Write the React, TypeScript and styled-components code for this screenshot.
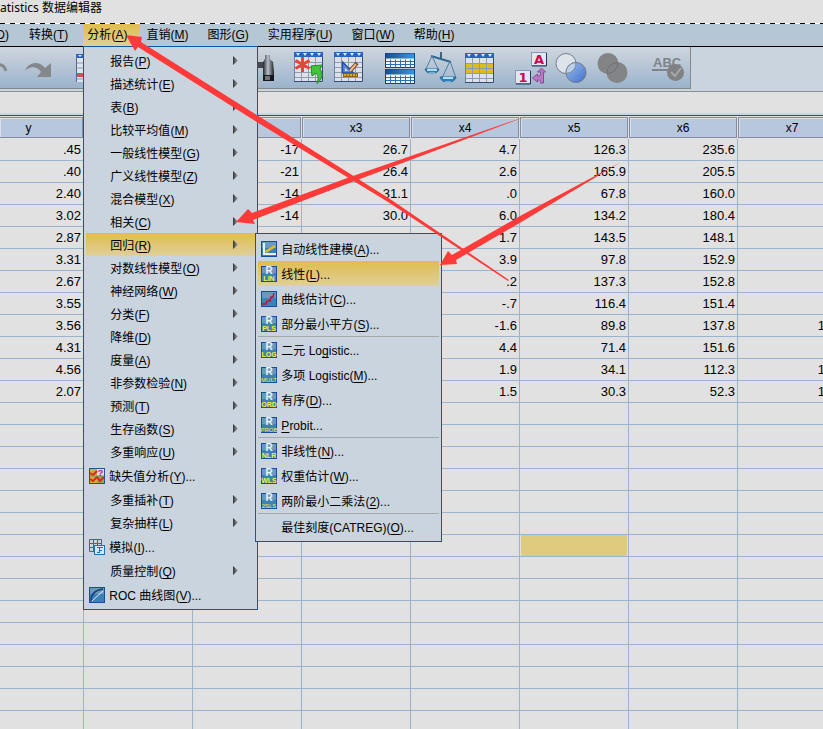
import React from 'react';
import styled, { createGlobalStyle, css } from 'styled-components';

const ink = '#000';
const blue = '#0f59a3';
const sheet = '#e1e1e1';
const panel = '#cad4df';
const gridLine = '#9ab4d0';
const gold = 'linear-gradient(#e0bd4c, #dfcf9c)';
const red = '#ff3a38';

const GlobalStyle = createGlobalStyle`
  * { box-sizing: border-box; }
  html, body { margin: 0; height: 100%; overflow: hidden; }
  #root { height: 100%; }
  body {
    background: ${sheet};
    color: ${ink};
    font: 12px/16px "Liberation Sans", "Noto Sans CJK SC", sans-serif;
  }
  button { font: inherit; color: inherit; border: 0; background: none; padding: 0; text-align: left; }
`;

const Window = styled.div`
  position: relative;
  height: 100%;
  overflow: hidden;
  display: flex;
  flex-direction: column;
`;

const TitleBar = styled.header`
  flex: none;
  height: 24px;
  position: relative;
  font-family: "Noto Sans", "Noto Sans CJK SC", sans-serif;
  line-height: 16px;
  white-space: pre;
  display: flex;
  flex-direction: column;
  justify-content: space-between;
`;

const DashedRule = styled.div`
  height: 1px;
  background: repeating-linear-gradient(90deg, #000 0 5px, #fff 5px 10px);
`;

const MenuBar = styled.nav`
  flex: none;
  height: 23px;
  display: flex;
  gap: 2px;
  background: #b5c7d5;
  border-bottom: 1px solid #000;
`;

const MenuBarItem = styled.div`
  position: relative;
  height: 22px;
`;

const MenuBarButton = styled.button<{ $open?: boolean; $cut?: boolean }>`
  height: 22px;
  padding: 0 13px 0 4px;
  white-space: nowrap;
  background: ${(p) => (p.$open ? gold : 'none')};
  ${(p) =>
    p.$cut &&
    css`
      display: flex;
      align-items: center;
      justify-content: flex-end;
      width: 23px;
      padding: 0 14px 0 0;
      overflow: hidden;
    `}
`;

const MenuList = styled.ul`
  position: absolute;
  z-index: 2;
  margin: 0;
  padding: 2px;
  list-style: none;
  background: ${panel};
  border: 1px solid ${blue};
`;

const MainMenu = styled(MenuList)`
  left: 0;
  top: 100%;
  width: 175px;
`;

const SubMenu = styled(MenuList)`
  left: 100%;
  top: 0;
  width: 187px;
`;

const MenuItem = styled.li<{ $active?: boolean; $tall?: boolean }>`
  position: relative;
  height: ${(p) => (p.$tall ? 25 : 23)}px;
  background: ${(p) => (p.$active ? gold : 'none')};
`;

const MenuSeparator = styled.li`
  height: 1px;
  background: #a5a8ab;
`;

const MenuButton = styled.button<{ $indent?: number }>`
  display: flex;
  align-items: center;
  gap: 4px;
  width: 100%;
  height: 100%;
  padding: 0 17px 0 ${(p) => p.$indent ?? 3}px;
  white-space: nowrap;
`;

const MenuLabel = styled.span`
  flex: 1;
  padding-top: 2px;
`;

const Mnemonic = styled.span`
  text-decoration: underline;
  text-underline-offset: 2px;
  text-decoration-skip-ink: none;
`;

const ToolbarArea = styled.div`
  flex: none;
  display: flex;
  background: ${panel};
  padding-bottom: 2px;
  border-bottom: 1px solid #8c9095;
`;

const Toolbar = styled.div`
  display: flex;
  align-items: center;
  height: 42px;
  padding-right: 6px;
  background: linear-gradient(#cfd6de, #9bb3cb);
  border-right: 1px solid #85878a;
  border-bottom: 1px solid #85878a;
`;

const ToolGroup = styled.div<{ $gap?: number }>`
  display: flex;
  gap: 8px;
  margin-left: ${(p) => p.$gap ?? 20}px;
`;

const ToolButton = styled.button`
  display: block;
  height: 32px;
  svg { display: block; overflow: visible; }
`;

const CellEditor = styled.input`
  flex: none;
  width: 100%;
  height: 21px;
  border: 0;
  background: ${sheet};
  font: inherit;
`;

const GridArea = styled.main`
  flex: 1;
  overflow: hidden;
  border-top: 2px solid #ccd5df;
  display: flex;
`;

const GridFrame = styled.div`
  flex: 1;
  overflow: hidden;
  border-top: 1px solid ${blue};
  padding-top: 1px;
`;

const DataTable = styled.table`
  table-layout: fixed;
  width: 847px;
  border-collapse: separate;
  border-spacing: 0;
`;

const Col = styled.col<{ $w: number }>`
  width: ${(p) => p.$w}px;
`;

const HeadCell = styled.th`
  height: 22px;
  padding: 0 1px 1px 0;
  font-weight: normal;
`;

const HeadFace = styled.div<{ $first?: boolean }>`
  height: 21px;
  line-height: 19px;
  padding-top: 1px;
  padding-right: ${(p) => (p.$first ? 25 : 0)}px;
  background: #b6c7de;
  border: 1px solid #838ca0;
  border-left-width: ${(p) => (p.$first ? 0 : 1)}px;
  box-shadow: inset 1px 1px 0 #d6dfea;
`;

const Cell = styled.td<{ $selected?: boolean; $edge?: boolean }>`
  height: 22px;
  padding: 0 ${(p) => (p.$edge ? 21 : 2)}px 0 0;
  text-align: right;
  font-size: 13px;
  line-height: 20px;
  border-right: 1px solid ${gridLine};
  border-bottom: 1px solid ${gridLine};
  ${(p) =>
    p.$selected &&
    css`
      background: #dfcb7d;
      box-shadow: inset 1px 0 0 ${sheet}, inset -1px 0 0 ${sheet};
    `}
`;

const Annotations = styled.svg`
  position: absolute;
  left: 0;
  top: 0;
  z-index: 5;
  pointer-events: none;
`;

/* ---------- menu icons ---------- */

const Tile = ({ children }: { children?: React.ReactNode }) => (
  <svg width="16" height="16" viewBox="0 0 16 16">
    <rect width="16" height="16" fill="#174f9e" />
    <rect x="1" y="1" width="14" height="7" fill="#6b99bd" />
    <rect x="1" y="7" width="14" height="8" fill="#3c82b5" />
    {children}
  </svg>
);

const RIcon = ({ code }: { code: string }) => (
  <Tile>
    <text x="8" y="8" textAnchor="middle" fontFamily="Liberation Sans" fontWeight="bold" fontSize="10" fill="#eef1f6">R</text>
    <text x="8" y="15" textAnchor="middle" fontFamily="Liberation Sans" fontWeight={code.length > 3 ? 'normal' : 'bold'} fontSize={code.length > 3 ? 6 : 7} fill="#f4ef3a">{code}</text>
  </Tile>
);

const AutoLinearIcon = () => (
  <Tile>
    <path d="M3 2v11h12" fill="none" stroke="#eceff2" strokeWidth="2" />
    <path d="M4.500 11L14 5" stroke="#e3c21f" strokeWidth="2.500" />
  </Tile>
);

const CurveIcon = () => (
  <Tile>
    <path d="M1 13h4l1-3h3l1-4h2l1-4" fill="none" stroke="#b81531" strokeWidth="1.500" />
  </Tile>
);

const MissingIcon = () => (
  <svg width="16" height="16" viewBox="0 0 16 16">
    <rect width="16" height="16" fill="#26509b" />
    <rect x="1" y="1" width="7" height="14" fill="#d8a83a" />
    <rect x="8" y="1" width="7" height="7" fill="#ead9e6" />
    <rect x="8" y="8" width="7" height="7" fill="#8fa84c" />
    <path d="M1 5l3 2 4-4M1 11l3 2 4-4 3 4 4-4" fill="none" stroke="#d92525" strokeWidth="2" />
    <path d="M1 8h14" stroke="#5fa244" />
    <text x="11.500" y="8" textAnchor="middle" fontFamily="Liberation Sans" fontWeight="bold" fontSize="9" fill="#9a169c">?</text>
  </svg>
);

const SimulateIcon = () => (
  <svg width="16" height="16" viewBox="0 0 16 16" fill="none" stroke="#1673c4">
    <path d="M.5.5h12v12H.5zM.5 4.500h12M.5 8.500h8M4.500.5v12M8.500.5v12" />
    <rect x="5.500" y="6.500" width="10" height="9" fill="#d9e6f2" />
    <path d="M8 8.500h6M10 11.500h3M10.500 9v5M8 13.500h3" />
  </svg>
);

const RocIcon = () => (
  <Tile>
    <path d="M2 14C2 7 6 3 14 2" fill="none" stroke="#173f78" strokeWidth="1.500" />
    <path d="M3 14L14 4" stroke="#e8eef4" />
  </Tile>
);

const Arrow = () => (
  <svg width="5" height="9" viewBox="0 0 5 9">
    <defs>
      <linearGradient id="tri">
        <stop offset="0" stopColor="#2f3338" />
        <stop offset="1" stopColor="#a8a8a8" />
      </linearGradient>
    </defs>
    <path d="M0 0l5 4.500L0 9z" fill="url(#tri)" />
  </svg>
);

const EmptyIcon = () => <svg width="16" height="16" viewBox="0 0 16 16" />;

/* ---------- toolbar icons ---------- */

const Svg = ({ children, w = 32 }: { children: React.ReactNode; w?: number }) => (
  <svg width={w} height="32" viewBox={`0 0 ${w} 32`}>{children}</svg>
);

const SheetBase = ({ band }: { band?: string }) => (
  <g>
    <rect x="2" y="0" width="29" height="30" fill="#dde2ea" />
    {band && <rect x="2" y="10" width="29" height="10" fill={band} />}
    <path d="M2 10.500h28M2 15.500h28M2 20.500h28M2 25.500h28M9.500 5v25M16.500 5v25M23.500 5v25" stroke="#929baa" fill="none" />
    <rect x="2" y="0" width="29" height="5" fill="#2b63c4" />
    <path d="M4 1h4l-2 3zM11 1h4l-2 3zM18 1h4l-2 3zM25 1h4l-2 3z" fill="#dfe8f6" />
    <path d="M2.500 5v25" stroke="#6c82a6" />
    <path d="M30.500 5v24.500H2" fill="none" stroke="#344d78" />
  </g>
);

const UndoIcon = () => (
  <Svg w={16}>
    <path d="M-6 16C-2 11 4 12 6 19" fill="none" stroke="#85888b" strokeWidth="3" />
  </Svg>
);

const RedoIcon = () => (
  <Svg>
    <path d="M1 19C4 10 15 8 21 16L27 11V25H13L17 20C13 14 6 14 1 19z" fill="#85888b" />
  </Svg>
);

const GotoIcon = () => (
  <Svg>
    <rect x="0" y="2" width="16" height="28" fill="#dfe4ea" />
    <path d="M0 11h16M0 16h16M0 27h16" stroke="#929baa" />
    <rect y="21" width="16" height="4" fill="#d94b58" />
    <rect y="2" width="16" height="4" fill="#2b63c4" />
    <path d="M2 3h4l-2 2z" fill="#dfe8f6" />
    <path d="M.5 2v28" stroke="#53698f" />
  </Svg>
);

const FindIcon = () => (
  <Svg>
    <defs>
      <linearGradient id="barrel">
        <stop offset="0" stopColor="#20252c" />
        <stop offset=".45" stopColor="#b9c1cb" />
        <stop offset="1" stopColor="#1c1f24" />
      </linearGradient>
    </defs>
    <rect x="2" y="3" width="6" height="5" fill="#34383e" />
    <path d="M1 8h8l2 10v11H0V18z" fill="url(#barrel)" />
    <rect x="10" y="10" width="11" height="6" fill="#414851" />
    <path d="M23 3h5v4l3 3 1 10v9H21V10l2-3z" fill="url(#barrel)" />
    <path d="M21 23h11v6H21z" fill="#15171a" />
    <path d="M23 24h5v4h-5z" fill="#70757b" />
  </Svg>
);

const InsertCaseIcon = () => (
  <Svg>
    <SheetBase />
    <path d="M10.500 5v15M3.500 8.500l14 8M17.500 8.500l-14 8" stroke="#e8443c" strokeWidth="3" />
    <path d="M19 14L30 13L28 17C31 21 31 27 25 31.500C27 26 26 23 24 21L20 24z" fill="#41c33a" stroke="#258b25" />
  </Svg>
);

const InsertVarIcon = () => (
  <Svg>
    <SheetBase />
    <path d="M10.500 10v11h11z" fill="#5b8bdb" stroke="#234fa8" strokeWidth="1.500" />
    <path d="M13 16v3h3z" fill="#dde2ea" />
    <path d="M25 11l-7 8" stroke="#7c3e26" strokeWidth="4" />
    <path d="M24 12l-6 7" stroke="#e8bb88" strokeWidth="2" />
    <rect x="11.500" y="21.500" width="14" height="3" fill="#e0aa23" stroke="#8a6412" />
    <path d="M14.500 22v2M17.500 22v2M20.500 22v2M23.500 22v2" stroke="#8a6412" />
  </Svg>
);

const SplitIcon = () => (
  <Svg>
    <defs>
      <linearGradient id="split">
        <stop offset="0" stopColor="#16508f" />
        <stop offset="1" stopColor="#3f93dd" />
      </linearGradient>
    </defs>
    {[1.5, 17.5].map((y) => (
      <g key={y}>
        <rect x="1.500" y={y} width="29" height="14" fill="#f0f4f8" stroke="#12427d" />
        <rect x="2" y={y} width="28" height="5" fill="url(#split)" />
        <path d={`M2 ${y + 8}h28M2 ${y + 11}h28M6.500 ${y + 6}v8M11.500 ${y + 6}v8M16.500 ${y + 6}v8M21.500 ${y + 6}v8M26.500 ${y + 6}v8`} stroke="#2a6fb5" fill="none" />
      </g>
    ))}
  </Svg>
);

const WeightIcon = () => (
  <Svg>
    <path d="M17 0v8M7 4l20 6" stroke="#32688e" strokeWidth="2" />
    <path d="M8 4L1.500 18h13L8 4M26 9l-8 17h14L26 9" fill="none" stroke="#4c7fa5" />
    <path d="M1 17h14c-1 6-13 6-14 0zM16 25h16c-1 7-15 7-16 0z" fill="#2e7cba" stroke="#326b9d" />
    <path d="M3 18h10M19 26h10" stroke="#a9e0f4" strokeWidth="2" />
    <path d="M5 21h6M21 30h6" stroke="#bfe4f2" />
  </Svg>
);

const SelectIcon = () => (
  <Svg>
    <g transform="translate(-1 1)"><SheetBase band="#dfbb20" /></g>
  </Svg>
);

const ValueLabelsIcon = () => (
  <Svg>
    <rect x="15.500" y=".5" width="15" height="13" fill="#e5e7ee" stroke="#8499b5" />
    <path d="M30.500 1v13H16" fill="none" stroke="#1d3763" />
    <rect x="-.5" y="18.500" width="15" height="13" fill="#e5e7ee" stroke="#8499b5" />
    <path d="M14.500 19v13H0" fill="none" stroke="#1d3763" />
    <text x="23" y="12" textAnchor="middle" fontFamily="DejaVu Sans" fontWeight="bold" fontSize="13" fill="#c9094f">A</text>
    <text x="7" y="30" textAnchor="middle" fontFamily="DejaVu Sans" fontWeight="bold" fontSize="13" fill="#c9094f">1</text>
    <path d="M25.500 16l4 4h-2v11h-3c0-3-1-3-3-3v2l-5-4 5-4v2c2 0 3 0 3-2v-2h-3z" fill="#b878c2" stroke="#8d4a9d" />
  </Svg>
);

const VennIcon = () => (
  <Svg>
    <defs>
      <linearGradient id="venn" x1="0" y1="0" x2="1" y2="1">
        <stop offset="0" stopColor="#9fc1ee" />
        <stop offset="1" stopColor="#3f6fcd" />
      </linearGradient>
    </defs>
    <circle cx="10" cy="11.500" r="10" fill="#dde3eb" stroke="#777f8b" />
    <circle cx="20" cy="20.500" r="10" fill="url(#venn)" stroke="#6e7788" />
    <path d="M20 10.500A10 10 0 0 0 10 21.500 10 10 0 0 0 20 10.500" fill="#bcd0ec" stroke="#7a828e" />
  </Svg>
);

const VennGrayIcon = () => (
  <Svg>
    <circle cx="12" cy="11.500" r="10.500" fill="#838486" />
    <circle cx="21" cy="20.500" r="10.500" fill="#838486" />
    <path d="M22 10.500A10.500 10.500 0 0 0 11 21.500 10.500 10.500 0 0 0 22 10.500" fill="none" stroke="#6f7072" />
  </Svg>
);

const SpellIcon = () => (
  <Svg>
    <text x="1" y="15" fontFamily="Liberation Sans" fontWeight="bold" fontSize="13" fill="#808386">ABC</text>
    <path d="M0 18h18" stroke="#808386" strokeWidth="2" />
    <circle cx="23.500" cy="20.500" r="8.500" fill="#7f8183" />
    <path d="M19 20l4 4 6-8" fill="none" stroke="#a5a7aa" strokeWidth="2" />
  </Svg>
);

/* ---------- data ---------- */

type Item = { text: string; key?: string; tail?: string; icon?: React.ReactNode; sub?: boolean; rule?: boolean };

const bar: Item[] = [
  { text: '转换', key: 'T' },
  { text: '分析', key: 'A' },
  { text: '直销', key: 'M' },
  { text: '图形', key: 'G' },
  { text: '实用程序', key: 'U' },
  { text: '窗口', key: 'W' },
  { text: '帮助', key: 'H' },
];

const analyze: Item[] = [
  { text: '报告', key: 'P', sub: true },
  { text: '描述统计', key: 'E', sub: true },
  { text: '表', key: 'B', sub: true },
  { text: '比较平均值', key: 'M', sub: true },
  { text: '一般线性模型', key: 'G', sub: true },
  { text: '广义线性模型', key: 'Z', sub: true },
  { text: '混合模型', key: 'X', sub: true },
  { text: '相关', key: 'C', sub: true },
  { text: '回归', key: 'R', sub: true },
  { text: '对数线性模型', key: 'O', sub: true },
  { text: '神经网络', key: 'W', sub: true },
  { text: '分类', key: 'F', sub: true },
  { text: '降维', key: 'D', sub: true },
  { text: '度量', key: 'A', sub: true },
  { text: '非参数检验', key: 'N', sub: true },
  { text: '预测', key: 'T', sub: true },
  { text: '生存函数', key: 'S', sub: true },
  { text: '多重响应', key: 'U', sub: true },
  { text: '缺失值分析', key: 'Y', tail: '...', icon: <MissingIcon /> },
  { text: '多重插补', key: 'T', sub: true },
  { text: '复杂抽样', key: 'L', sub: true },
  { text: '模拟', key: 'I', tail: '...', icon: <SimulateIcon /> },
  { text: '质量控制', key: 'Q', sub: true },
  { text: 'ROC 曲线图', key: 'V', tail: '...', icon: <RocIcon /> },
];

const regression: Item[] = [
  { text: '自动线性建模', key: 'A', tail: '...', icon: <AutoLinearIcon /> },
  { text: '线性', key: 'L', tail: '...', icon: <RIcon code="LIN" /> },
  { text: '曲线估计', key: 'C', tail: '...', icon: <CurveIcon /> },
  { text: '部分最小平方', key: 'S', tail: '...', icon: <RIcon code="PLS" />, rule: true },
  { text: '二元 Lo_g_istic...', icon: <RIcon code="LOG" /> },
  { text: '多项 Logistic', key: 'M', tail: '...', icon: <RIcon code="MULT" /> },
  { text: '有序', key: 'D', tail: '...', icon: <RIcon code="ORD" /> },
  { text: '_P_robit...', icon: <RIcon code="PROB" />, rule: true },
  { text: '非线性', key: 'N', tail: '...', icon: <RIcon code="NLR" /> },
  { text: '权重估计', key: 'W', tail: '...', icon: <RIcon code="WLS" /> },
  { text: '两阶最小二乘法', key: '2', tail: '...', icon: <RIcon code="2SLS" />, rule: true },
  { text: '最佳刻度(CATREG)', key: 'O', tail: '...', icon: <EmptyIcon /> },
];

const columns = ['y', 'x1', 'x2', 'x3', 'x4', 'x5', 'x6', 'x7'];

const rows: string[][] = [
  ['.45', '', '-17', '26.7', '4.7', '126.3', '235.6', ''],
  ['.40', '', '-21', '26.4', '2.6', '165.9', '205.5', ''],
  ['2.40', '', '-14', '31.1', '.0', '67.8', '160.0', ''],
  ['3.02', '', '-14', '30.0', '6.0', '134.2', '180.4', ''],
  ['2.87', '', '-17', '27.7', '1.7', '143.5', '148.1', ''],
  ['3.31', '', '', '', '3.9', '97.8', '152.9', ''],
  ['2.67', '', '', '', '.2', '137.3', '152.8', ''],
  ['3.55', '', '', '', '-.7', '116.4', '151.4', ''],
  ['3.56', '', '', '', '-1.6', '89.8', '137.8', '1'],
  ['4.31', '', '', '', '4.4', '71.4', '151.6', ''],
  ['4.56', '', '', '', '1.9', '34.1', '112.3', '1'],
  ['2.07', '', '', '', '1.5', '30.3', '52.3', '1'],
  ...Array.from({ length: 16 }, () => Array(8).fill('')),
];

/* ---------- parts ---------- */

const Label = ({ item }: { item: Item }) => (
  <>
    {item.text.split('_').map((part, i) => (i === 1 ? <Mnemonic key={i}>{part}</Mnemonic> : part))}
    {item.key && <>(<Mnemonic>{item.key}</Mnemonic>)</>}
    {item.tail}
  </>
);

const RegressionMenu = () => (
  <SubMenu>
    {regression.map((item, i) => (
      <React.Fragment key={item.text}>
        <MenuItem $tall $active={i === 1}>
          <MenuButton>
            {item.icon}
            <MenuLabel><Label item={item} /></MenuLabel>
          </MenuButton>
        </MenuItem>
        {item.rule && <MenuSeparator role="separator" />}
      </React.Fragment>
    ))}
  </SubMenu>
);

const AnalyzeMenu = () => (
  <MainMenu>
    {analyze.map((item) => {
      const open = item.text === '回归';
      return (
        <MenuItem key={item.text} $tall={!!item.icon} $active={open}>
          <MenuButton $indent={item.icon ? 3 : 24}>
            {item.icon}
            <MenuLabel><Label item={item} /></MenuLabel>
            {item.sub && <Arrow />}
          </MenuButton>
          {open && <RegressionMenu />}
        </MenuItem>
      );
    })}
  </MainMenu>
);

const Tool = ({ name, children }: { name: string; children: React.ReactNode }) => (
  <ToolButton aria-label={name}>{children}</ToolButton>
);

export default function App() {
  return (
    <Window>
      <GlobalStyle />
      <TitleBar>
        <span>atistics 数据编辑器</span>
        <DashedRule />
      </TitleBar>

      <MenuBar>
        <MenuBarButton $cut>(<Mnemonic>D</Mnemonic>)</MenuBarButton>
        {bar.map((item) => {
          const open = item.text === '分析';
          return (
            <MenuBarItem key={item.text}>
              <MenuBarButton $open={open}><Label item={item} /></MenuBarButton>
              {open && <AnalyzeMenu />}
            </MenuBarItem>
          );
        })}
      </MenuBar>

      <ToolbarArea>
        <Toolbar role="toolbar">
          <ToolGroup $gap={0}>
            <Tool name="撤销"><UndoIcon /></Tool>
            <Tool name="重做"><RedoIcon /></Tool>
          </ToolGroup>
          <ToolGroup>
            <Tool name="转到"><GotoIcon /></Tool>
          </ToolGroup>
          <ToolGroup $gap={134}>
            <Tool name="查找"><FindIcon /></Tool>
          </ToolGroup>
          <ToolGroup $gap={18}>
            <Tool name="插入个案"><InsertCaseIcon /></Tool>
            <Tool name="插入变量"><InsertVarIcon /></Tool>
          </ToolGroup>
          <ToolGroup>
            <Tool name="拆分文件"><SplitIcon /></Tool>
            <Tool name="加权个案"><WeightIcon /></Tool>
            <Tool name="选择个案"><SelectIcon /></Tool>
          </ToolGroup>
          <ToolGroup>
            <Tool name="值标签"><ValueLabelsIcon /></Tool>
            <Tool name="使用变量集"><VennIcon /></Tool>
            <Tool name="显示所有变量"><VennGrayIcon /></Tool>
          </ToolGroup>
          <ToolGroup $gap={24}>
            <Tool name="拼写检查"><SpellIcon /></Tool>
          </ToolGroup>
        </Toolbar>
      </ToolbarArea>

      <CellEditor aria-label="单元格编辑器" />

      <GridArea>
        <GridFrame>
          <DataTable>
            <colgroup>
              {columns.map((c, i) => <Col key={c} $w={i === 0 ? 84 : 109} />)}
            </colgroup>
            <thead>
              <tr>
                {columns.map((c, i) => (
                  <HeadCell key={c} scope="col"><HeadFace $first={i === 0}>{c}</HeadFace></HeadCell>
                ))}
              </tr>
            </thead>
            <tbody>
              {rows.map((row, r) => (
                <tr key={r}>
                  {row.map((value, c) => (
                    <Cell key={c} $selected={r === 18 && c === 5} $edge={c === 7}>{value}</Cell>
                  ))}
                </tr>
              ))}
            </tbody>
          </DataTable>
        </GridFrame>
      </GridArea>

      <Annotations width="823" height="729" viewBox="0 0 823 729" fill={red}>
        <path d="M126 35L142 37L141 42L260 117L390 199L509 280L508 281L388 202L260 124L138 47L135 51z" />
        <path d="M236 222L248 209L252 213L350 177L527 116L352 182L253 220L255 224z" />
        <path d="M440 265L448 251L452 255L520 216L621 162L523 221L456 260L457 264z" />
      </Annotations>
    </Window>
  );
}
